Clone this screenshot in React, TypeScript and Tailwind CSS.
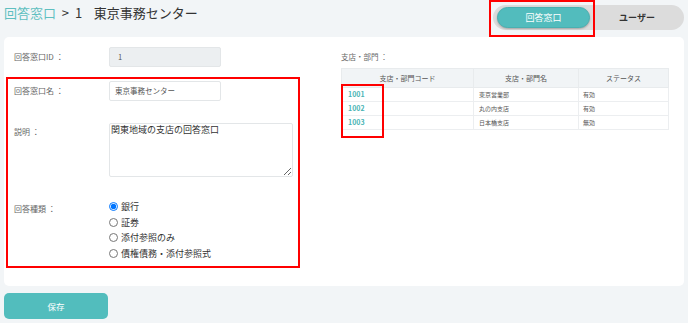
import React from "react";

const rows = [
  { code: "1001", name: "東京営業部", status: "有効" },
  { code: "1002", name: "丸の内支店", status: "有効" },
  { code: "1003", name: "日本橋支店", status: "無効" },
];

const kinds = ["銀行", "証券", "添付参照のみ", "債権債務・添付参照式"];

export default function App() {
  return (
    <div
      className="relative w-[688px] h-[323px] overflow-hidden bg-[#f2f5f7] text-[#333]"
      style={{ fontFamily: '"Noto Sans CJK JP", "Noto Sans", sans-serif' }}
    >
      {/* header */}
      <div className="flex items-start justify-between h-[37px] pl-[4px] pr-[4px]">
        <h1 className="mt-[4px] text-[13px] leading-[18px] font-normal whitespace-pre">
          <span className="text-[#5fbfc0]">回答窓口</span>
          <span className="text-[#333]">{"  >  1    東京事務センター"}</span>
        </h1>
        <div className="relative mt-[5px] flex items-center w-[191px] h-[25px] rounded-full bg-[#dcdcdc] pl-[4px]">
          <button className="w-[93px] h-[21px] rounded-full bg-[#52bcbd] border border-[#49b0b1] text-white text-[9px] shadow-[0_1px_2px_rgba(0,0,0,0.25)]">
            回答窓口
          </button>
          <span className="flex-1 text-center text-[9px] font-semibold text-[#333]">ユーザー</span>
          <div className="absolute left-[-4px] top-[-5px] w-[106px] h-[37px] border-2 border-[#ff0000]" />
        </div>
      </div>

      {/* card */}
      <div className="ml-[4px] w-[680px] h-[249px] rounded-[5px] bg-white flex">
        {/* left form */}
        <div className="w-[333px] pt-[10px] pl-[10px]">
          <div className="flex items-center h-[20px]">
            <label className="w-[95px] text-[8px] text-[#666]">回答窓口ID ：</label>
            <div className="w-[112px] h-[20px] rounded-[2px] bg-[#eceff1] border border-[#e3e6e8] text-[7.5px] text-[#555] flex items-center pl-[8px]">
              1
            </div>
          </div>
          <div className="flex items-center h-[20px] mt-[14px]">
            <label className="w-[95px] text-[8px] text-[#666]">回答窓口名 ：</label>
            <div className="w-[112px] h-[20px] rounded-[2px] bg-white border border-[#e3e6e8] text-[7.5px] text-[#555] flex items-center pl-[5px]">
              東京事務センター
            </div>
          </div>
          <div className="flex items-start mt-[22px]">
            <label className="w-[95px] mt-[3px] text-[8px] text-[#666]">説明 ：</label>
            <textarea
              className="w-[184px] h-[54px] rounded-[2px] border border-[#e3e6e8] text-[9px] leading-[12px] text-[#333] px-[1px] py-0"
              defaultValue="関東地域の支店の回答窓口"
            />
          </div>
          <div className="flex items-start mt-[22px]">
            <label className="w-[95px] mt-[4px] text-[8px] text-[#666]">回答種類 ：</label>
            <div className="flex flex-col">
              {kinds.map((k, i) => (
                <label key={k} className="flex items-center h-[15.5px] text-[9px] text-[#333]">
                  <input
                    type="radio"
                    name="kind"
                    defaultChecked={i === 0}
                    className="m-0 mr-[3px] w-[9px] h-[9px]"
                  />
                  {k}
                </label>
              ))}
            </div>
          </div>
        </div>

        {/* right side */}
        <div className="pl-[4px] pt-[10px]">
          <div className="h-[20px] flex items-center text-[7.5px] text-[#666]">支店・部門 ：</div>
          <table className="mt-[1px] w-[328px] border-collapse text-[6px]">
            <thead>
              <tr className="bg-[#f1f4f6] h-[19px]">
                <th className="w-[132px] border border-[#e8ebed] font-normal text-[7px] text-[#555]">支店・部門コード</th>
                <th className="w-[105px] border border-[#e8ebed] font-normal text-[7px] text-[#555]">支店・部門名</th>
                <th className="border border-[#e8ebed] font-normal text-[7px] text-[#555]">ステータス</th>
              </tr>
            </thead>
            <tbody>
              {rows.map((r) => (
                <tr key={r.code} className="h-[14px]">
                  <td className="border border-[#eceef0] pl-[6px] text-[7px] font-semibold text-[#4ab4b4]">{r.code}</td>
                  <td className="border border-[#eceef0] pl-[5px] text-[#555]">{r.name}</td>
                  <td className="border border-[#eceef0] pl-[4px] text-[#555]">{r.status}</td>
                </tr>
              ))}
            </tbody>
          </table>
        </div>
      </div>

      {/* save */}
      <div className="mt-[5px] ml-[4px]">
        <button className="w-[104px] h-[26px] rounded-[5px] bg-[#52bdbd] text-white text-[8.5px]">保存</button>
      </div>

      {/* annotation frames */}
      <div className="absolute left-[6px] top-[77px] w-[294px] h-[191px] border-2 border-[#ff0000]" />
      <div className="absolute left-[341px] top-[84px] w-[43px] h-[54px] border-2 border-[#ff0000]" />
    </div>
  );
}
